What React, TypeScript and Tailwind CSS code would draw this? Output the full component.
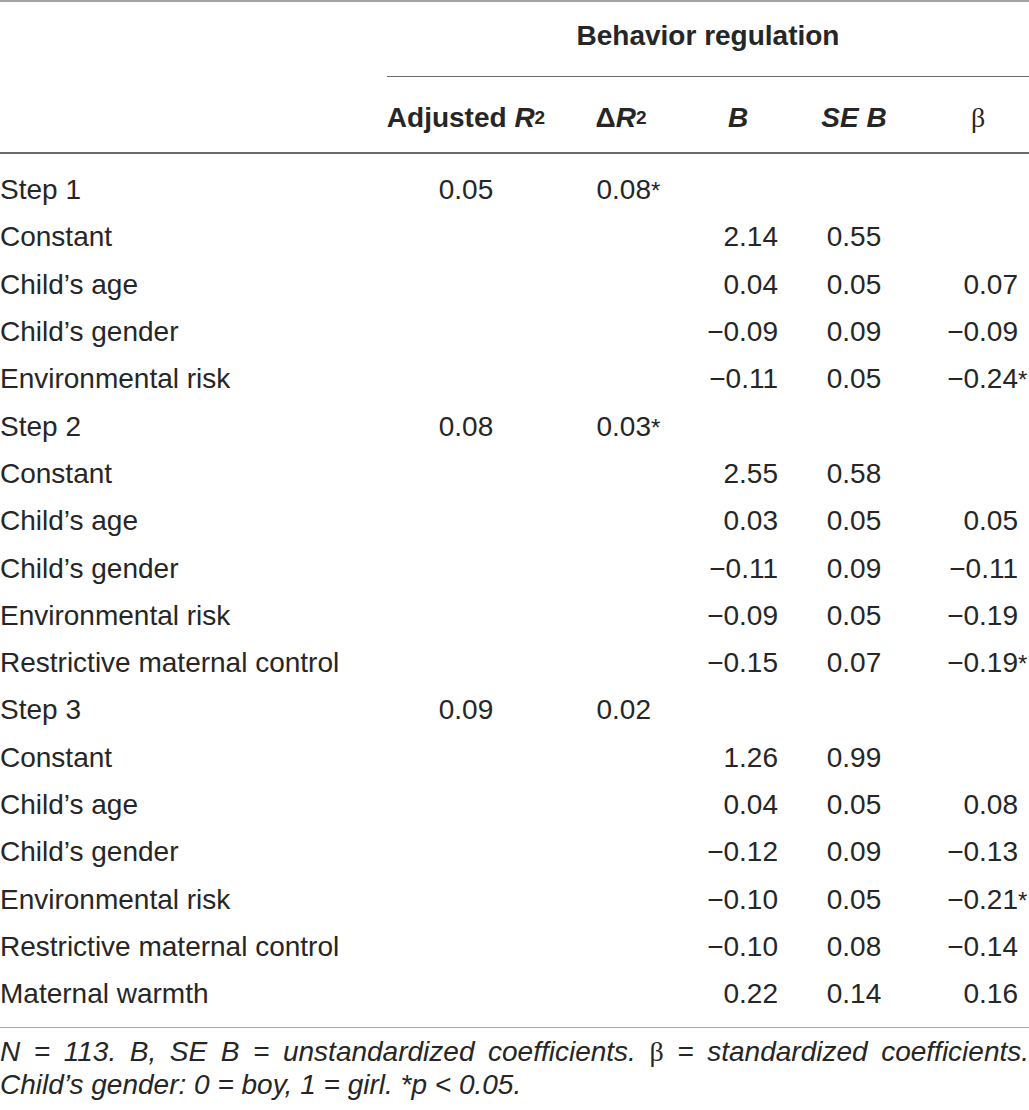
import React from "react";

type Row = [string, string, string, string, string, string];

const rows: Row[] = [
  ["Step 1", "0.05", "0.08*", "", "", ""],
  ["Constant", "", "", "2.14", "0.55", ""],
  ["Child’s age", "", "", "0.04", "0.05", "0.07"],
  ["Child’s gender", "", "", "−0.09", "0.09", "−0.09"],
  ["Environmental risk", "", "", "−0.11", "0.05", "−0.24*"],
  ["Step 2", "0.08", "0.03*", "", "", ""],
  ["Constant", "", "", "2.55", "0.58", ""],
  ["Child’s age", "", "", "0.03", "0.05", "0.05"],
  ["Child’s gender", "", "", "−0.11", "0.09", "−0.11"],
  ["Environmental risk", "", "", "−0.09", "0.05", "−0.19"],
  ["Restrictive maternal control", "", "", "−0.15", "0.07", "−0.19*"],
  ["Step 3", "0.09", "0.02", "", "", ""],
  ["Constant", "", "", "1.26", "0.99", ""],
  ["Child’s age", "", "", "0.04", "0.05", "0.08"],
  ["Child’s gender", "", "", "−0.12", "0.09", "−0.13"],
  ["Environmental risk", "", "", "−0.10", "0.05", "−0.21*"],
  ["Restrictive maternal control", "", "", "−0.10", "0.08", "−0.14"],
  ["Maternal warmth", "", "", "0.22", "0.14", "0.16"],
];

const grid = "grid grid-cols-[385px_162px_148px_86px_146px_102px]";

function Num({ v }: { v: string }) {
  if (!v) return null;
  const star = v.endsWith("*");
  const n = star ? v.slice(0, -1) : v;
  return (
    <>
      {n}
      {star && <span className="inline-block w-0 text-left text-[24px]">*</span>}
    </>
  );
}

export default function App() {
  return (
    <div
      className="w-[1029px] bg-white text-[#262626] text-[28px] leading-none"
      style={{ fontFamily: '"Liberation Sans", Arial, sans-serif' }}
    >
      <div className="h-[2px] bg-[#a3a3a3]" />
      {/* spanning header */}
      <div className="flex h-[75px]">
        <div className="w-[387px]" />
        <div className="flex flex-1 flex-col">
          <div className="flex flex-1 items-center justify-center pb-[6px] font-bold">
            <span>Behavior regulation</span>
          </div>
          <div className="h-[1.5px] bg-[#6b6b6b]" />
        </div>
      </div>
      {/* column header */}
      <div className={`${grid} h-[75px] items-center font-bold pt-[6px]`}>
        <div />
        <div className="text-center">
          Adjusted <i>R</i>
          <sup className="text-[19px] relative top-[-3px]">2</sup>
        </div>
        <div className="text-center">
          Δ<i>R</i>
          <sup className="text-[19px] relative top-[-3px]">2</sup>
        </div>
        <div className="text-center">
          <i>B</i>
        </div>
        <div className="text-center">
          <i>SE B</i>
        </div>
        <div
          className="text-center font-normal"
          style={{ fontFamily: '"Liberation Serif", serif' }}
        >
          β
        </div>
      </div>
      <div className="h-[1.5px] bg-[#6b6b6b]" />
      {/* body */}
      <div className="pt-[13px] pb-[9px]">
        {rows.map((r, i) => (
          <div key={i} className={`${grid} h-[47.3px] items-center`}>
            <div className="whitespace-nowrap">{r[0]}</div>
            <div className="text-center">
              <Num v={r[1]} />
            </div>
            <div className="text-right pr-[44px]">
              <Num v={r[2]} />
            </div>
            <div className="text-right pr-[3px]">
              <Num v={r[3]} />
            </div>
            <div className="text-center">
              <Num v={r[4]} />
            </div>
            <div className="text-right pr-[11px]">
              <Num v={r[5]} />
            </div>
          </div>
        ))}
      </div>
      <div className="h-[1.5px] bg-[#ababab]" />
      {/* footnote */}
      <div className="pt-[7px] italic leading-[33px]">
        <p className="text-justify [text-align-last:justify]">
          <i>N</i> = 113. <i>B</i>, <i>SE B</i> = unstandardized coefficients.{" "}
          <span className="not-italic" style={{ fontFamily: '"Liberation Serif", serif' }}>
            β
          </span>{" "}
          = standardized coefficients.
        </p>
        <p>
          Child’s gender: 0 = boy, 1 = girl. *<i>p</i> &lt; 0.05.
        </p>
      </div>
    </div>
  );
}
